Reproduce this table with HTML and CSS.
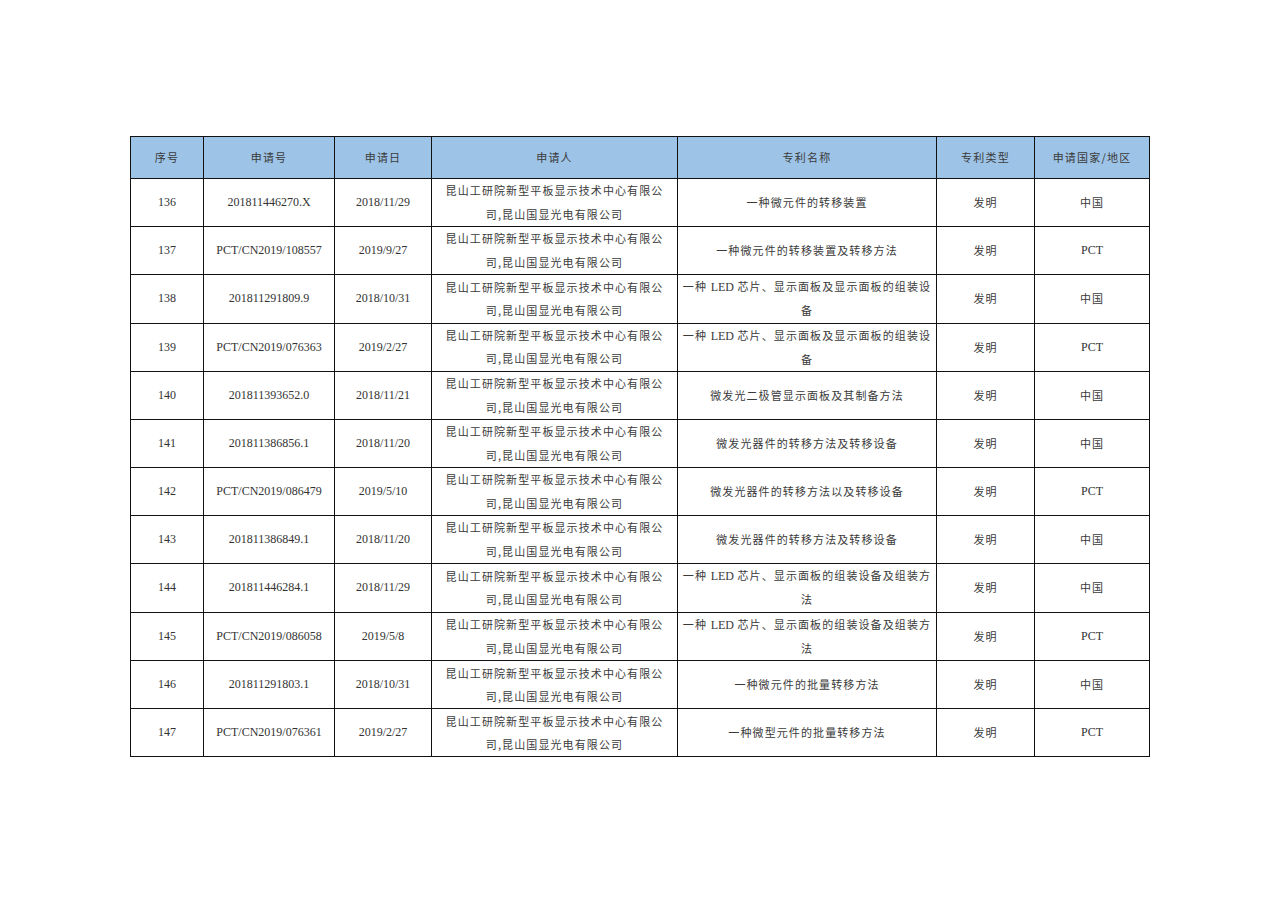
FILE: index.html
```html
<!DOCTYPE html>
<html lang="zh-CN">
<head>
<meta charset="utf-8">
<title>专利列表</title>
<link rel="stylesheet" href="styles.css">
</head>
<body>
<div class="page">
<table class="patents">
<colgroup>
<col class="c1"><col class="c2"><col class="c3"><col class="c4"><col class="c5"><col class="c6"><col class="c7">
</colgroup>
<thead>
<tr><th>序号</th><th>申请号</th><th>申请日</th><th>申请人</th><th>专利名称</th><th>专利类型</th><th>申请国家/地区</th></tr>
</thead>
<tbody>
<tr><td>136</td><td>201811446270.X</td><td>2018/11/29</td><td class="cn">昆山工研院新型平板显示技术中心有限公<br>司,昆山国显光电有限公司</td><td class="cn">一种微元件的转移装置</td><td class="cn">发明</td><td class="cn">中国</td></tr>
<tr><td>137</td><td>PCT/CN2019/108557</td><td>2019/9/27</td><td class="cn">昆山工研院新型平板显示技术中心有限公<br>司,昆山国显光电有限公司</td><td class="cn">一种微元件的转移装置及转移方法</td><td class="cn">发明</td><td>PCT</td></tr>
<tr><td>138</td><td>201811291809.9</td><td>2018/10/31</td><td class="cn">昆山工研院新型平板显示技术中心有限公<br>司,昆山国显光电有限公司</td><td class="cn">一种 <span class="lat">LED</span> 芯片、显示面板及显示面板的组装设<br>备</td><td class="cn">发明</td><td class="cn">中国</td></tr>
<tr><td>139</td><td>PCT/CN2019/076363</td><td>2019/2/27</td><td class="cn">昆山工研院新型平板显示技术中心有限公<br>司,昆山国显光电有限公司</td><td class="cn">一种 <span class="lat">LED</span> 芯片、显示面板及显示面板的组装设<br>备</td><td class="cn">发明</td><td>PCT</td></tr>
<tr><td>140</td><td>201811393652.0</td><td>2018/11/21</td><td class="cn">昆山工研院新型平板显示技术中心有限公<br>司,昆山国显光电有限公司</td><td class="cn">微发光二极管显示面板及其制备方法</td><td class="cn">发明</td><td class="cn">中国</td></tr>
<tr><td>141</td><td>201811386856.1</td><td>2018/11/20</td><td class="cn">昆山工研院新型平板显示技术中心有限公<br>司,昆山国显光电有限公司</td><td class="cn">微发光器件的转移方法及转移设备</td><td class="cn">发明</td><td class="cn">中国</td></tr>
<tr><td>142</td><td>PCT/CN2019/086479</td><td>2019/5/10</td><td class="cn">昆山工研院新型平板显示技术中心有限公<br>司,昆山国显光电有限公司</td><td class="cn">微发光器件的转移方法以及转移设备</td><td class="cn">发明</td><td>PCT</td></tr>
<tr><td>143</td><td>201811386849.1</td><td>2018/11/20</td><td class="cn">昆山工研院新型平板显示技术中心有限公<br>司,昆山国显光电有限公司</td><td class="cn">微发光器件的转移方法及转移设备</td><td class="cn">发明</td><td class="cn">中国</td></tr>
<tr><td>144</td><td>201811446284.1</td><td>2018/11/29</td><td class="cn">昆山工研院新型平板显示技术中心有限公<br>司,昆山国显光电有限公司</td><td class="cn">一种 <span class="lat">LED</span> 芯片、显示面板的组装设备及组装方<br>法</td><td class="cn">发明</td><td class="cn">中国</td></tr>
<tr><td>145</td><td>PCT/CN2019/086058</td><td>2019/5/8</td><td class="cn">昆山工研院新型平板显示技术中心有限公<br>司,昆山国显光电有限公司</td><td class="cn">一种 <span class="lat">LED</span> 芯片、显示面板的组装设备及组装方<br>法</td><td class="cn">发明</td><td>PCT</td></tr>
<tr><td>146</td><td>201811291803.1</td><td>2018/10/31</td><td class="cn">昆山工研院新型平板显示技术中心有限公<br>司,昆山国显光电有限公司</td><td class="cn">一种微元件的批量转移方法</td><td class="cn">发明</td><td class="cn">中国</td></tr>
<tr><td>147</td><td>PCT/CN2019/076361</td><td>2019/2/27</td><td class="cn">昆山工研院新型平板显示技术中心有限公<br>司,昆山国显光电有限公司</td><td class="cn">一种微型元件的批量转移方法</td><td class="cn">发明</td><td>PCT</td></tr>
</tbody>
</table>
</div>
</body>
</html>
```
FILE: styles.css
```css
html, body {
  margin: 0;
  padding: 0;
  background: #ffffff;
}
.page {
  padding: 136px 0 0 130px;
}
.patents {
  border-collapse: collapse;
  table-layout: fixed;
  width: 1019px;
  font-family: "Liberation Serif", "Noto Sans CJK SC", serif;
  font-size: 12px;
  color: #333333;
}
.c1 { width: 73px; }
.c2 { width: 131px; }
.c3 { width: 97px; }
.c4 { width: 246px; }
.c5 { width: 259px; }
.c6 { width: 98px; }
.c7 { width: 115px; }
.patents th,
.patents td {
  border: 1px solid #111111;
  text-align: center;
  vertical-align: middle;
  padding: 0;
  line-height: 23px;
}
.patents th {
  height: 41px;
  background: #9dc3e6;
  font-family: "Noto Sans CJK SC", sans-serif;
  font-weight: normal;
  font-size: 11px;
  letter-spacing: 1.2px;
  color: #3a3a3a;
}
.patents td {
  height: 47px;
}
.patents td.cn {
  font-family: "Noto Sans CJK SC", sans-serif;
  font-size: 11px;
  letter-spacing: 1.1px;
  line-height: 23.3px;
  color: #3a3a3a;
}
.patents td.cn .lat {
  font-family: "Liberation Serif", serif;
  font-size: 12px;
  letter-spacing: 0;
}
```
